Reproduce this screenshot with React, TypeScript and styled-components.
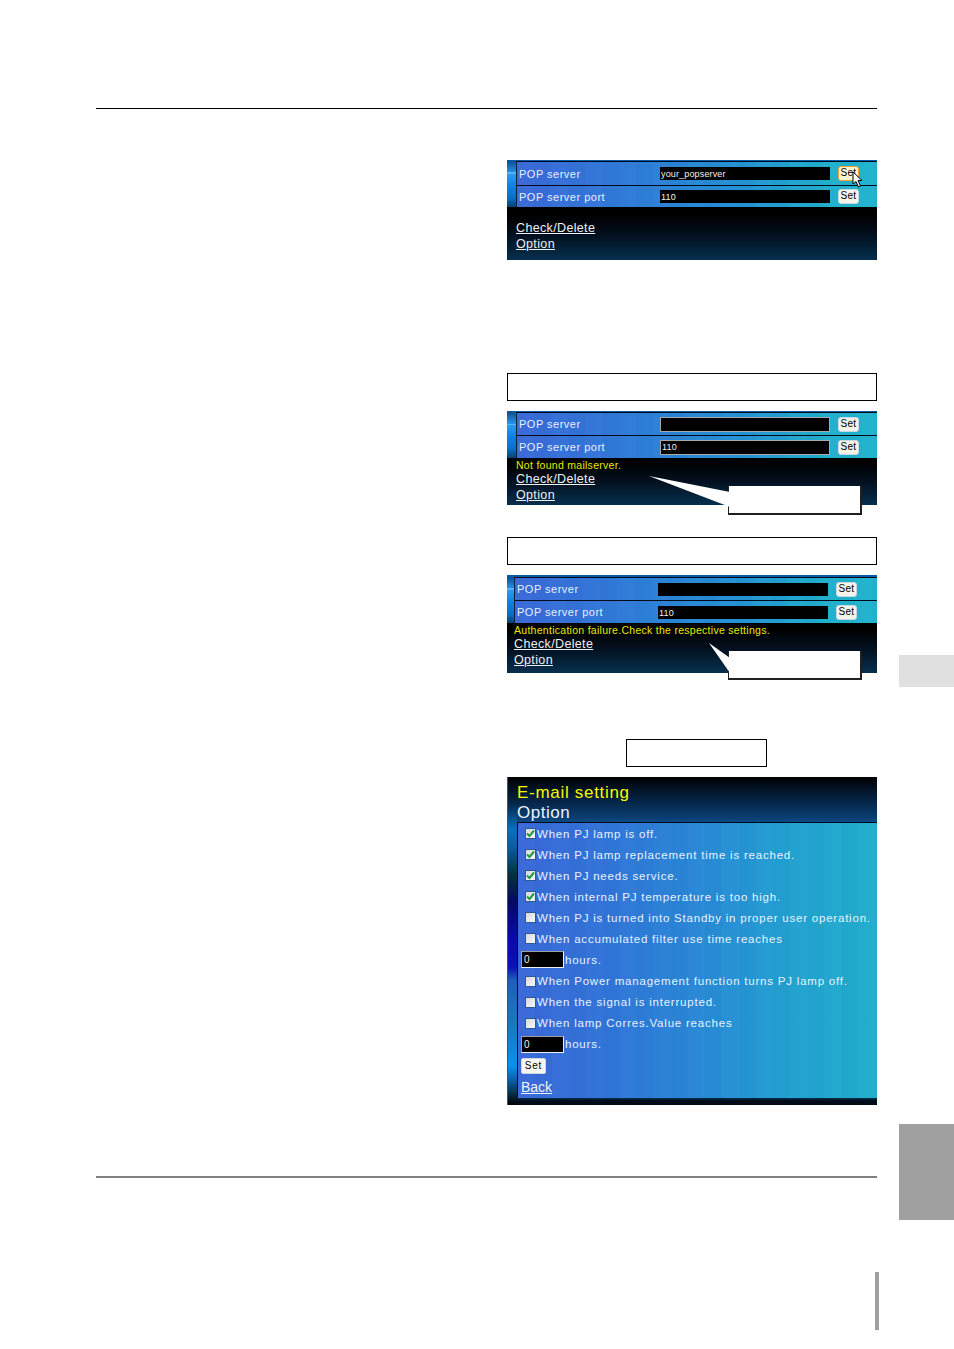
import React from 'react'
import styled, { createGlobalStyle } from 'styled-components'

const GlobalStyle = createGlobalStyle`
    html, body {
        margin: 0;
        padding: 0;
        background: #ffffff;
    }
    body {
        font-family: "Liberation Sans", Arial, sans-serif;
    }
`

const optionRows: { label: string; checked?: boolean; hours?: boolean }[] = [
    { label: 'When PJ lamp is off.', checked: true },
    { label: 'When PJ lamp replacement time is reached.', checked: true },
    { label: 'When PJ needs service.', checked: true },
    { label: 'When internal PJ temperature is too high.', checked: true },
    { label: 'When PJ is turned into Standby in proper user operation.' },
    { label: 'When accumulated filter use time reaches', hours: true },
    { label: 'When Power management function turns PJ lamp off.' },
    { label: 'When the signal is interrupted.' },
    { label: 'When lamp Corres.Value reaches', hours: true },
]

const CheckBox = ({ checked }: { checked?: boolean }) => (
    <Box>
        {checked && (
            <svg width="9" height="9" viewBox="0 0 9 9">
                <path d="M1 4.5 L3.5 7 L8 1.5" fill="none" stroke="#1f9a3c" strokeWidth="2" />
            </svg>
        )}
    </Box>
)

const Pointer = () => (
    <PointerWrap>
        <svg width="12" height="17" viewBox="0 0 12 17">
            <path d="M1 1 L1 13 L4 10.5 L6.5 16 L8.5 15 L6 9.5 L10 9.5 Z" fill="#ffffff" stroke="#000000" strokeWidth="1" />
        </svg>
    </PointerWrap>
)

const Callout = ({ points, $top }: { points: string; $top: number }) => (
    <CalloutWrap $top={$top}>
        <CalloutBox />
        <CalloutTail viewBox="0 0 214 60" width="214" height="60">
            <polygon points={points} fill="#ffffff" />
        </CalloutTail>
    </CalloutWrap>
)

const App = () => {
    return (
        <Page>
            <GlobalStyle />
            <Main>
                <TopRule />
                <RightColumn>
                    <Screen $mt={51} $h={100}>
                        <Fields>
                            <Strip $w={9} />
                            <Rows>
                                <FieldRow $h={23}>
                                    <FieldLabel>POP server</FieldLabel>
                                    <FieldInput>your_popserver</FieldInput>
                                    <SetButton $hover>Set<Pointer /></SetButton>
                                </FieldRow>
                                <FieldRow $h={21}>
                                    <FieldLabel>POP server port</FieldLabel>
                                    <FieldInput>110</FieldInput>
                                    <SetButton>Set</SetButton>
                                </FieldRow>
                            </Rows>
                        </Fields>
                        <Footer $pt={14}>
                            <FooterLink>Check/Delete</FooterLink>
                            <FooterLink>Option</FooterLink>
                        </Footer>
                    </Screen>

                    <LabelBox $mt={113} />
                    <Screen $mt={10} $h={94}>
                        <Fields>
                            <Strip $w={9} />
                            <Rows>
                                <FieldRow $h={22}>
                                    <FieldLabel>POP server</FieldLabel>
                                    <FieldInput $framed />
                                    <SetButton>Set</SetButton>
                                </FieldRow>
                                <FieldRow $h={22}>
                                    <FieldLabel>POP server port</FieldLabel>
                                    <FieldInput $framed>110</FieldInput>
                                    <SetButton>Set</SetButton>
                                </FieldRow>
                            </Rows>
                        </Fields>
                        <Footer $pt={1}>
                            <FooterMessage>Not found mailserver.</FooterMessage>
                            <FooterLink>Check/Delete</FooterLink>
                            <FooterLink>Option</FooterLink>
                        </Footer>
                        <Callout $top={65} points="1,0 82,16 82,31" />
                    </Screen>

                    <LabelBox $mt={32} />
                    <Screen $mt={10} $h={98}>
                        <Fields $band={2}>
                            <Strip $w={7} />
                            <Rows>
                                <FieldRow $h={22}>
                                    <FieldLabel>POP server</FieldLabel>
                                    <FieldInput />
                                    <SetButton>Set</SetButton>
                                </FieldRow>
                                <FieldRow $h={22}>
                                    <FieldLabel>POP server port</FieldLabel>
                                    <FieldInput>110</FieldInput>
                                    <SetButton>Set</SetButton>
                                </FieldRow>
                            </Rows>
                        </Fields>
                        <Footer $pt={1} $left={7}>
                            <FooterMessage>Authentication failure.Check the respective settings.</FooterMessage>
                            <FooterLink>Check/Delete</FooterLink>
                            <FooterLink>Option</FooterLink>
                        </Footer>
                        <Callout $top={66} points="61,2 82,17 82,32" />
                    </Screen>

                    <SmallLabelBox />
                    <OptionScreen>
                        <OptionStrip />
                        <OptionContent>
                            <OptionHeader>
                                <OptionTitle>E-mail setting</OptionTitle>
                                <OptionSubtitle>Option</OptionSubtitle>
                            </OptionHeader>
                            <OptionPanel>
                                {optionRows.map(row => (
                                    <React.Fragment key={row.label}>
                                        <OptionRow>
                                            <CheckBox checked={row.checked} />
                                            <span>{row.label}</span>
                                        </OptionRow>
                                        {row.hours && (
                                            <HoursRow>
                                                <HoursInput>0</HoursInput>
                                                <span>hours.</span>
                                            </HoursRow>
                                        )}
                                    </React.Fragment>
                                ))}
                                <HoursRow>
                                    <OptionSet>Set</OptionSet>
                                </HoursRow>
                                <HoursRow>
                                    <BackLink>Back</BackLink>
                                </HoursRow>
                            </OptionPanel>
                            <OptionBottom />
                        </OptionContent>
                    </OptionScreen>
                </RightColumn>
                <BottomRule />
                <FolioRow>
                    <FolioBar />
                </FolioRow>
            </Main>
            <Rail>
                <SideTab $mt={655} $h={32} $color="#e0e0e0" />
                <SideTab $mt={437} $h={96} $color="#a0a0a0" />
            </Rail>
        </Page>
    )
}

const bands = 'repeating-linear-gradient(90deg, rgba(255,255,255,0.012) 0 17px, rgba(0,0,0,0.012) 17px 34px)'

const Page = styled.div`
    width: 954px;
    height: 1349px;
    display: flex;
    background: #ffffff;
    overflow: hidden;
`

const Main = styled.div`
    width: 781px;
    margin-left: 96px;
    padding-top: 108px;
    box-sizing: border-box;
    display: flex;
    flex-direction: column;
`

const Rail = styled.div`
    width: 55px;
    margin-left: 22px;
    display: flex;
    flex-direction: column;
`

const SideTab = styled.div<{ $mt: number; $h: number; $color: string }>`
    margin-top: ${p => p.$mt}px;
    height: ${p => p.$h}px;
    background: ${p => p.$color};
`

const TopRule = styled.div`
    height: 1px;
    background: #000000;
`

const BottomRule = styled.div`
    margin-top: 71px;
    height: 2px;
    background: #808080;
`

const FolioRow = styled.div`
    display: flex;
    justify-content: flex-end;
    margin-top: 94px;
    margin-right: -2px;
`

const FolioBar = styled.div`
    width: 4px;
    height: 58px;
    background: #a0a0a0;
`

const RightColumn = styled.div`
    margin-left: 411px;
    width: 370px;
    display: flex;
    flex-direction: column;
`

const Screen = styled.div<{ $mt: number; $h: number }>`
    position: relative;
    margin-top: ${p => p.$mt}px;
    height: ${p => p.$h}px;
    background: linear-gradient(180deg, #000000 55%, #02101f 75%, #06304e 100%);
    display: flex;
    flex-direction: column;
`

const Fields = styled.div<{ $band?: number }>`
    display: flex;
    border-top: ${p => p.$band ?? 1}px solid #0a5aa8;
`

const Strip = styled.div<{ $w: number }>`
    width: ${p => p.$w}px;
    flex: none;
    background:
        linear-gradient(180deg, transparent 25%, rgba(190, 225, 255, 0.35) 25% 28%, transparent 28%),
        linear-gradient(180deg, #0a4f90 0%, #2a9cf0 28%, #1080e0 55%, #0a70c8 80%, #06406e 100%);
`

const Rows = styled.div`
    flex: 1;
    display: flex;
    flex-direction: column;
    border-left: 1px solid #05213f;
`

const FieldRow = styled.div<{ $h: number }>`
    height: ${p => p.$h}px;
    display: grid;
    grid-template-columns: 133px 170px 21px;
    column-gap: 8px;
    align-items: center;
    padding-left: 2px;
    border-top: 1px solid #000a18;
    background:
        ${bands},
        linear-gradient(90deg, #3a68d8 0%, #2f7ad8 30%, #2490d4 60%, #20aecc 85%, #20b4cc 100%);
`

const FieldLabel = styled.div`
    font-size: 11px;
    color: #e6f0ff;
    letter-spacing: 0.5px;
`

const FieldInput = styled.div<{ $framed?: boolean }>`
    box-sizing: border-box;
    height: ${p => (p.$framed ? 15 : 13)}px;
    padding-left: 1px;
    background: #000000;
    border: ${p => (p.$framed ? '1px solid #a8a8a8' : 'none')};
    color: #f0f0f0;
    font-size: 9px;
    line-height: ${p => (p.$framed ? 13 : 15)}px;
    letter-spacing: 0.15px;
    overflow: hidden;
`

const SetButton = styled.div<{ $hover?: boolean }>`
    position: relative;
    box-sizing: border-box;
    height: 15px;
    width: 21px;
    background: ${p => (p.$hover ? '#fff4d0' : '#f4f4ec')};
    border: 1px solid ${p => (p.$hover ? '#f0a030' : '#c8d8e0')};
    border-radius: 3px;
    color: #000000;
    font-size: 10px;
    line-height: 12px;
    text-align: center;
    letter-spacing: 0.3px;
`

const PointerWrap = styled.div`
    position: absolute;
    left: 13px;
    top: 4px;
    line-height: 0;
`

const Footer = styled.div<{ $pt: number; $left?: number }>`
    padding-top: ${p => p.$pt}px;
    padding-left: ${p => p.$left ?? 9}px;
    display: flex;
    flex-direction: column;
    align-items: flex-start;
`

const FooterMessage = styled.div`
    font-size: 10.5px;
    line-height: 13px;
    color: #e8e800;
    letter-spacing: 0.28px;
`

const FooterLink = styled.div`
    font-size: 12.5px;
    line-height: 15.5px;
    color: #f0f0f0;
    text-decoration: underline;
    letter-spacing: 0.35px;
`

const CalloutWrap = styled.div<{ $top: number }>`
    position: absolute;
    top: ${p => p.$top}px;
    left: 141px;
    width: 214px;
    height: 40px;
`

const CalloutTail = styled.svg`
    position: absolute;
    left: 0;
    top: 0;
`

const CalloutBox = styled.div`
    position: absolute;
    box-sizing: border-box;
    left: 80px;
    top: 10px;
    width: 134px;
    height: 29px;
    background: #ffffff;
    border-right: 2px solid #202020;
    border-bottom: 2px solid #202020;
    border-left: 1px solid #202020;
`

const LabelBox = styled.div<{ $mt: number }>`
    margin-top: ${p => p.$mt}px;
    height: 28px;
    box-sizing: border-box;
    border: 1px solid #000000;
    background: #ffffff;
`

const SmallLabelBox = styled.div`
    margin-top: 66px;
    margin-left: 119px;
    width: 141px;
    height: 28px;
    box-sizing: border-box;
    border: 1px solid #000000;
`

const OptionScreen = styled.div`
    margin-top: 10px;
    height: 328px;
    display: flex;
    background: #000a18;
`

const OptionStrip = styled.div`
    width: 9px;
    flex: none;
    border-left: 1px solid #505058;
    background: linear-gradient(
        180deg,
        #000000 0%,
        #032848 8%,
        #0a70c0 16%,
        #0a5a98 22%,
        #03303c 30%,
        #040a60 38%,
        #0a0ab0 50%,
        #0c10b8 58%,
        #2060b8 62%,
        #1a78b8 75%,
        #0a90f0 88%,
        #0a5a98 93%,
        #000000 100%
    );
`

const OptionContent = styled.div`
    flex: 1;
    display: flex;
    flex-direction: column;
    min-width: 0;
`

const OptionHeader = styled.div`
    height: 45px;
    flex: none;
    box-sizing: border-box;
    padding-top: 6px;
    background: linear-gradient(180deg, #000000 0%, #02152a 30%, #0a3d72 90%, #0c4a84 100%);
`

const OptionTitle = styled.div`
    font-size: 17px;
    line-height: 20px;
    color: #f8f800;
    letter-spacing: 0.7px;
`

const OptionSubtitle = styled.div`
    font-size: 17px;
    line-height: 19px;
    color: #f0f4ff;
    letter-spacing: 0.5px;
`

const OptionPanel = styled.div`
    flex: 1;
    display: flex;
    flex-direction: column;
    border-top: 1px solid #000a18;
    border-left: 1px solid #000a18;
    background:
        ${bands},
        linear-gradient(90deg, #3a68d8 0%, #3074d8 25%, #2888d6 50%, #22a0d0 75%, #20aecc 100%);
    color: #e8f2ff;
    font-size: 11.5px;
    letter-spacing: 0.79px;
`

const OptionRow = styled.div`
    height: 21px;
    flex: none;
    display: flex;
    align-items: center;
    gap: 1px;
    padding-left: 7px;
    white-space: nowrap;
`

const Box = styled.div`
    width: 9px;
    height: 9px;
    flex: none;
    display: flex;
    align-items: center;
    justify-content: center;
    background: linear-gradient(135deg, #d8d8d8, #f8f8f8);
    border: 1px solid #2a5a98;
`

const HoursRow = styled.div`
    height: 21.5px;
    flex: none;
    display: flex;
    align-items: center;
    gap: 1px;
    padding-left: 3px;
`

const HoursInput = styled.div`
    box-sizing: border-box;
    width: 43px;
    height: 17px;
    padding-left: 2px;
    background: #000000;
    border: 1px solid #a0a0a0;
    border-bottom-color: #f0f0f0;
    border-right-color: #f0f0f0;
    color: #f0f0f0;
    font-size: 10px;
    line-height: 15px;
`

const OptionSet = styled.div`
    box-sizing: border-box;
    width: 25px;
    height: 16px;
    background: #f8f8f0;
    border: 1px solid #c8d8e0;
    border-radius: 2px;
    color: #000000;
    font-size: 10px;
    line-height: 14px;
    text-align: center;
`

const BackLink = styled.div`
    font-size: 14px;
    color: #f0f4ff;
    text-decoration: underline;
    letter-spacing: 0;
`

const OptionBottom = styled.div`
    height: 7px;
    flex: none;
    background: linear-gradient(180deg, #04304e 0%, #000a18 40%);
`

export default App
